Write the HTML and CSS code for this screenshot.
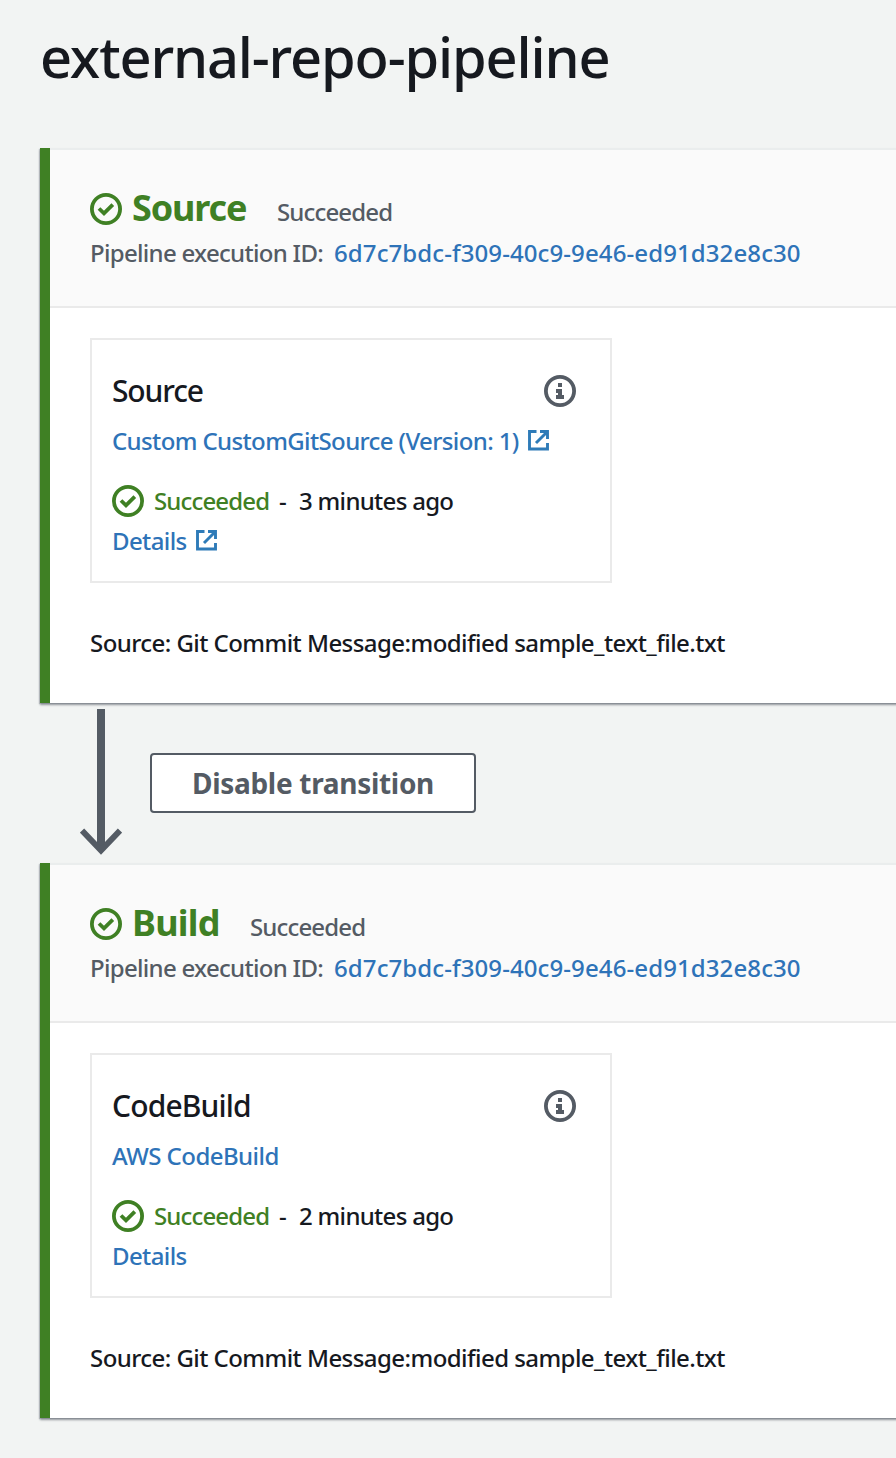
FILE: index.html
```
<!DOCTYPE html>
<html lang="en">
<head>
<meta charset="utf-8">
<title>external-repo-pipeline</title>
<link rel="stylesheet" href="styles.css">
</head>
<body>
<svg class="defs" aria-hidden="true">
  <symbol id="check" viewBox="0 0 32 32"><circle cx="16" cy="16" r="14.1"/><path d="M9 15.5l5 4.9 8.8-8.7"/></symbol>
  <symbol id="info" viewBox="0 0 32 32"><circle cx="16" cy="16" r="14.1"/><path class="solid" d="M14 8h4v4h-4zM12 14h6v6h2v4h-8v-4h2v-2h-2z"/></symbol>
  <symbol id="external" viewBox="0 0 21 21"><path d="M8.500 1.500h-7v17.500h18V13M12 1.500h7.500V9M18.500 2.500L8 13"/></symbol>
</svg>
<main class="page">
  <h1 class="title"><span>external-repo-pipeline</span></h1>

  <section class="stage">
    <header class="stage-head">
      <div class="stage-line">
        <svg class="status-icon"><use href="#check"/></svg>
        <h2 class="stage-name name-source">Source</h2>
        <span class="stage-status">Succeeded</span>
      </div>
      <div class="execution"><span class="exec-label">Pipeline execution ID:</span><a class="exec-id">6d7c7bdc-f309-40c9-9e46-ed91d32e8c30</a></div>
    </header>
    <div class="stage-body">
      <article class="card">
        <div class="card-head"><h3 class="card-name">Source</h3><svg class="info-icon"><use href="#info"/></svg></div>
        <div class="provider"><a class="provider-link">Custom CustomGitSource (Version: 1)</a><svg class="ext-icon"><use href="#external"/></svg></div>
        <div class="result"><svg class="status-icon"><use href="#check"/></svg><span class="ok">Succeeded</span><span class="dash">-</span><span class="ago">3 minutes ago</span></div>
        <div class="details"><a class="details-link">Details</a><svg class="ext-icon"><use href="#external"/></svg></div>
      </article>
      <p class="commit"><span>Source: Git Commit Message:modified sample_text_file.txt</span></p>
    </div>
  </section>

  <div class="transition">
    <svg class="arrow" viewBox="0 0 42 146"><path class="shaft" d="M21 0v140"/><path class="tip" d="M2 121.500L21 141.500 40 121.500"/></svg>
    <button class="disable"><span>Disable transition</span></button>
  </div>

  <section class="stage">
    <header class="stage-head">
      <div class="stage-line">
        <svg class="status-icon"><use href="#check"/></svg>
        <h2 class="stage-name name-build">Build</h2>
        <span class="stage-status">Succeeded</span>
      </div>
      <div class="execution"><span class="exec-label">Pipeline execution ID:</span><a class="exec-id">6d7c7bdc-f309-40c9-9e46-ed91d32e8c30</a></div>
    </header>
    <div class="stage-body">
      <article class="card">
        <div class="card-head"><h3 class="card-name card-build">CodeBuild</h3><svg class="info-icon"><use href="#info"/></svg></div>
        <div class="provider"><a class="provider-link provider-aws">AWS CodeBuild</a></div>
        <div class="result"><svg class="status-icon"><use href="#check"/></svg><span class="ok">Succeeded</span><span class="dash">-</span><span class="ago">2 minutes ago</span></div>
        <div class="details"><a class="details-link">Details</a></div>
      </article>
      <p class="commit"><span>Source: Git Commit Message:modified sample_text_file.txt</span></p>
    </div>
  </section>
</main>
</body>
</html>
```
FILE: styles.css
```
* { box-sizing: border-box; }
body { margin: 0; background: #f2f4f3; color: #16191f; font: 500 24px/40px "Noto Sans", "Open Sans", sans-serif; overflow: hidden; white-space: nowrap; }
h1, h2, h3, p { margin: 0; }
svg { flex: none; fill: none; display: block; }
.defs { position: absolute; width: 0; height: 0; }
.page { height: 1458px; padding-left: 40px; }
.title { height: 148px; padding-top: 20px; font-size: 56px; line-height: 72px; font-weight: 500; letter-spacing: -1.15px; }

.stage { height: 555px; border-left: 10px solid #3f8024; background: #fff; box-shadow: 0 2px 2px #687078b0, -1px 1px 1px #68707850; margin-right: -8px; }
.stage-head { height: 160px; padding: 40px 0 0 40px; background: #fafafa; border-top: 2px solid #eaeded; border-bottom: 2px solid #eaeaea; }
.stage-line { display: flex; height: 42px; }
.status-icon, .info-icon { width: 32px; height: 32px; stroke: #3f8024; stroke-width: 3.800; }
.stage-line .status-icon { margin-top: 3px; }
.stage-name { width: 115px; margin-left: 10px; color: #3f8024; font-size: 36px; line-height: 36px; font-weight: 700; letter-spacing: -1.150px; }
.name-build { width: 88px; letter-spacing: -.8px; }
.stage-status { margin-left: 30px; color: #545b64; line-height: 44px; letter-spacing: -.850px; }
.execution { display: flex; color: #545b64; line-height: 42px; }
.exec-label { width: 244px; letter-spacing: -.7px; }
.exec-id { letter-spacing: .1px; }
a { color: #2e73b8; }
.stage-body { padding: 30px 0 0 40px; }
.card { width: 522px; height: 245px; padding: 30px 20px 0; border: 2px solid #eaeaea; }
.card-head { display: flex; height: 48px; justify-content: space-between; }
.card-name { font-size: 30px; line-height: 42px; font-weight: 500; letter-spacing: -1.150px; }
.card-build { letter-spacing: -.850px; }
.info-icon { margin: 5px 14px 0 0; stroke: #545b64; }
.solid { fill: #545b64; stroke: none; }
.provider { display: flex; height: 62px; line-height: 46px; }
.provider-link { width: 416px; letter-spacing: -.620px; }
.provider-aws { letter-spacing: -.550px; }
.ext-icon { width: 21px; height: 21px; stroke: #2e7bb8; stroke-width: 2.900; margin-top: 12px; }
.result { display: flex; height: 40px; line-height: 42px; }
.result .status-icon { margin-top: 5px; }
.ok { width: 115px; margin-left: 10px; color: #3f8024; letter-spacing: -.850px; }
.dash { width: 20px; margin-left: 10px; }
.ago { letter-spacing: -.7px; }
.details { display: flex; line-height: 42px; }
.details-link { width: 84px; letter-spacing: -.6px; }
.details .ext-icon { margin-top: 10px; }
.commit { margin-top: 40px; letter-spacing: -.560px; }

.transition { display: flex; height: 160px; padding: 6px 0 0 40px; }
.arrow { width: 42px; height: 146px; stroke: #545b64; }
.shaft { stroke-width: 8; }
.tip { stroke-width: 6; }
.disable { width: 326px; height: 60px; margin: 44px 0 0 28px; padding: 0; border: 2px solid #545b64; border-radius: 4px; background: #fff; color: #545b64; font: 700 28px/56px "Noto Sans", sans-serif; letter-spacing: -.3px; }
```
